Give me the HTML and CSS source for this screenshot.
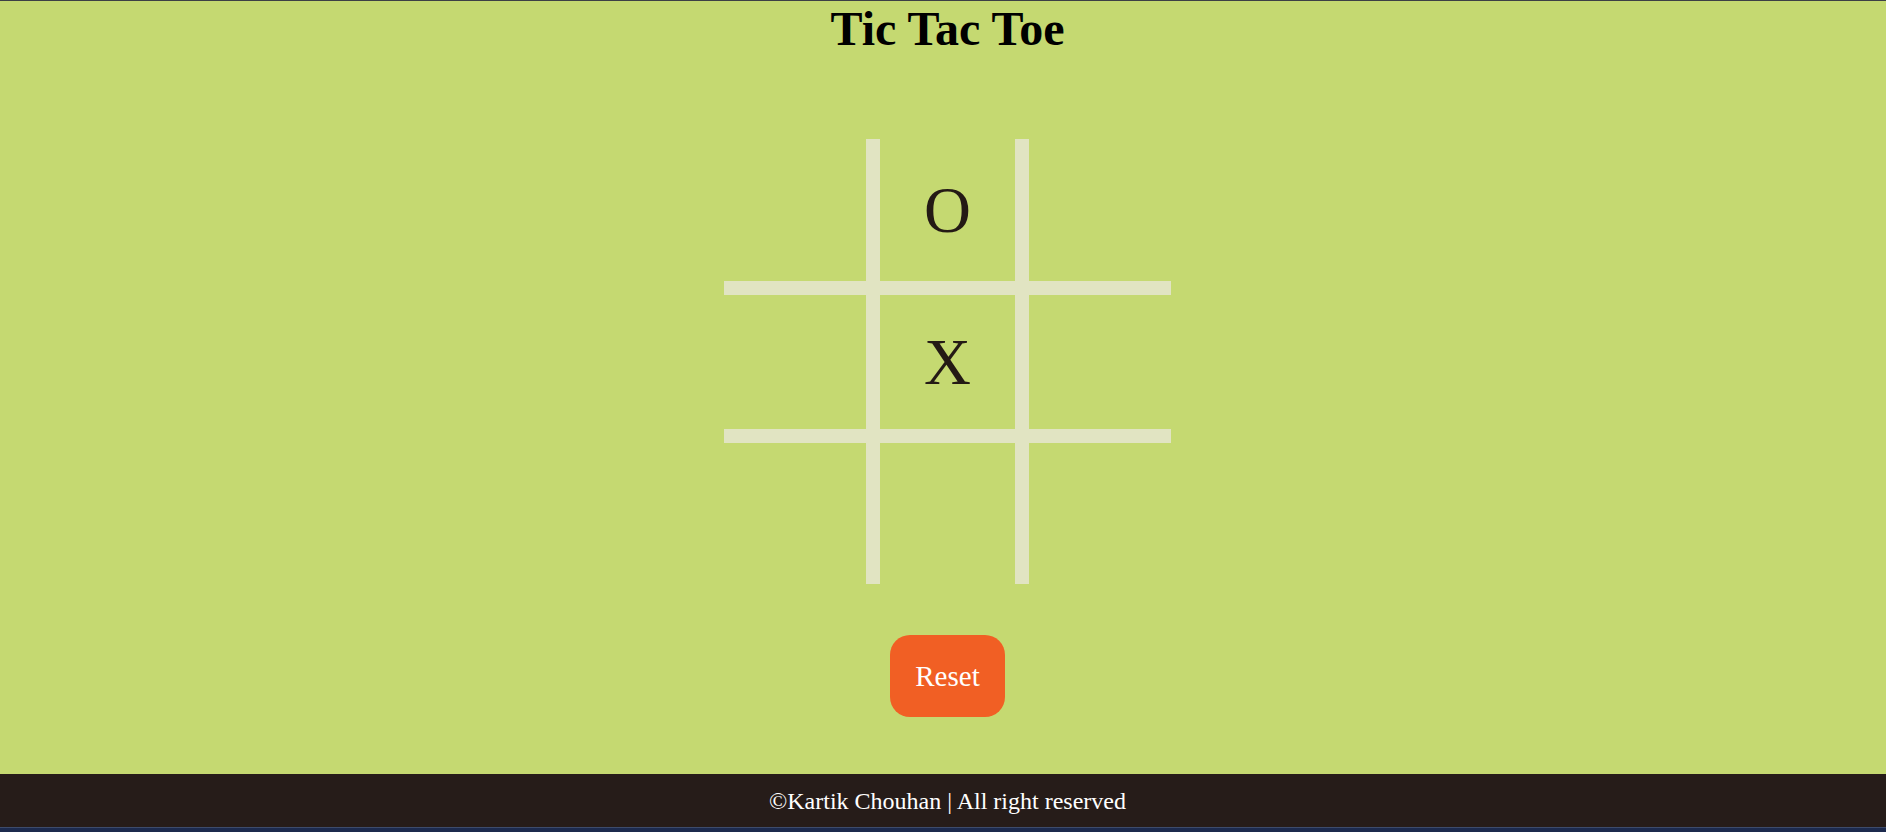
FILE: index.html
```html
<!DOCTYPE html>
<html lang="en">
<head>
<meta charset="utf-8">
<title>Tic Tac Toe</title>
<link rel="stylesheet" href="styles.css">
</head>
<body>
<div class="page">
  <main class="main">
    <h1 class="title">Tic Tac Toe</h1>
    <div class="board">
      <div class="cell"></div>
      <div class="cell">O</div>
      <div class="cell"></div>
      <div class="cell"></div>
      <div class="cell">X</div>
      <div class="cell"></div>
      <div class="cell"></div>
      <div class="cell"></div>
      <div class="cell"></div>
    </div>
    <button class="reset">Reset</button>
  </main>
  <footer class="footer">©Kartik Chouhan | All right reserved</footer>
  <div class="strip"></div>
</div>
</body>
</html>
```

FILE: styles.css
```css
html, body {
  margin: 0;
  padding: 0;
}
body {
  background: #c5d971;
  font-family: "Liberation Serif", "Times New Roman", serif;
  border-top: 1px solid #3d4045;
}
.page {
  display: flex;
  flex-direction: column;
}
.main {
  display: flex;
  flex-direction: column;
  align-items: center;
  padding-left: 9px;
}
.title {
  margin: 0;
  font-size: 48px;
  line-height: 55px;
  font-weight: bold;
  color: #000;
}
.board {
  margin-top: 83px;
  display: grid;
  grid-template-columns: 149px 149px 149px;
  grid-template-rows: 149px 148px 148px;
}
.cell {
  box-sizing: border-box;
  border: 7px solid #e1e4c2;
  display: flex;
  align-items: center;
  justify-content: center;
  font-size: 65px;
  color: #241a15;
}
.cell:nth-child(-n+3) { border-top: none; }
.cell:nth-child(n+7) { border-bottom: none; }
.cell:nth-child(3n+1) { border-left: none; }
.cell:nth-child(3n) { border-right: none; }
.reset {
  margin-top: 51px;
  padding: 24px 25px;
  border: none;
  border-radius: 20px;
  background: #f15f24;
  color: #fff;
  font-family: "Liberation Serif", "Times New Roman", serif;
  font-size: 29px;
  line-height: 34px;
}
.footer {
  margin-top: 57px;
  background: #261c19;
  color: #fff;
  font-size: 24px;
  line-height: 27px;
  padding: 14px 0 12px 9px;
  text-align: center;
}
.strip {
  height: 4px;
  background: #1c2a4e;
  border-top: 1px solid #3d4b6b;
}
```
